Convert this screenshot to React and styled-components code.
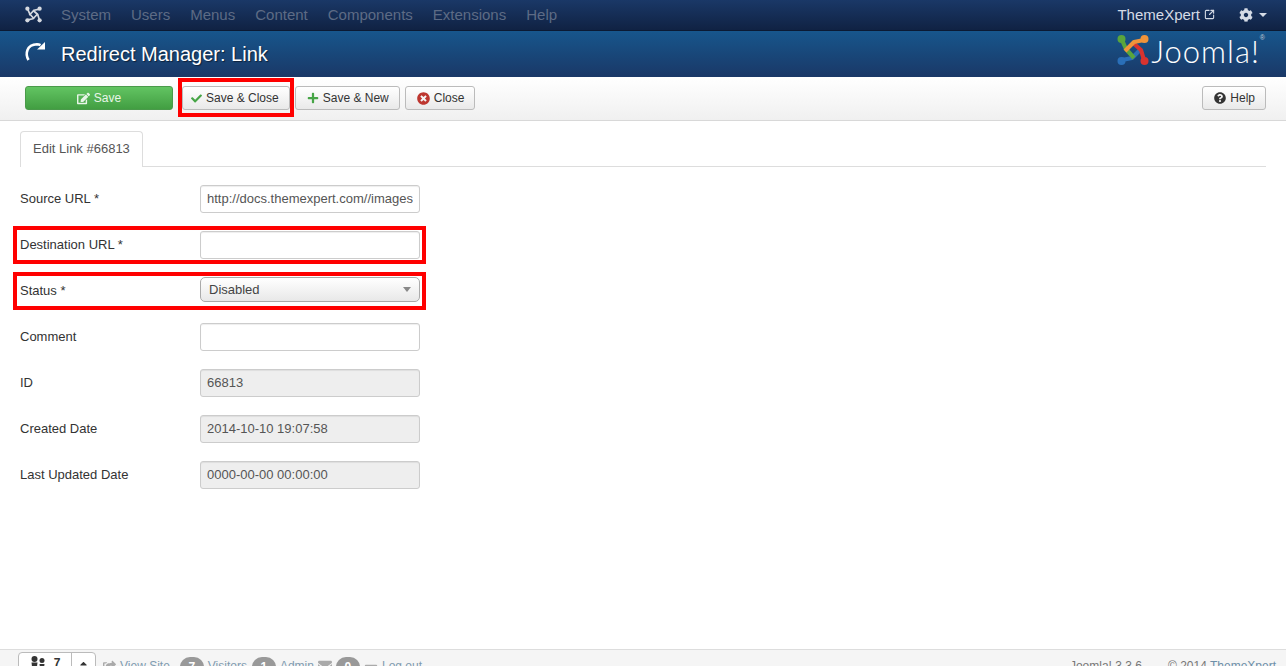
import React from "react";
import styled, { createGlobalStyle } from "styled-components";
import {
  FaCheck,
  FaPlus,
  FaTimesCircle,
  FaQuestionCircle,
  FaCog,
  FaEdit,
  FaEnvelope,
  FaMinus,
  FaShareSquare,
  FaCaretUp,
} from "react-icons/fa";
import { SquareArrowOutUpRight } from "lucide-react";

const GlobalStyle = createGlobalStyle`
  html, body { margin: 0; padding: 0; height: 100%; overflow: hidden; background: #fff; }
  body { font-family: "Liberation Sans", Arial, sans-serif; font-size: 13px; color: #333; }
  #root { height: 100%; }
  * { box-sizing: border-box; }
`;

const menus = ["System", "Users", "Menus", "Content", "Components", "Extensions", "Help"];

const fields = [
  { label: "Source URL *", value: "http://docs.themexpert.com//images" },
  { label: "Destination URL *", value: "", marked: true },
  { label: "Status *", select: "Disabled", marked: true },
  { label: "Comment", value: "" },
  { label: "ID", value: "66813", readOnly: true },
  { label: "Created Date", value: "2014-10-10 19:07:58", readOnly: true },
  { label: "Last Updated Date", value: "0000-00-00 00:00:00", readOnly: true },
];

// four hooked arms around a hollow diamond
function JoomlaMark({ size, mono }) {
  const c = (color) => (mono ? "#d5d9e0" : color);
  return (
    <svg
      width={size}
      height={size}
      viewBox="0 0 32 32"
      fill="none"
      strokeWidth={mono ? 3.2 : 4.2}
      strokeLinejoin="round"
    >
      <path d="M5 26 L15 24 L24 15" stroke={c("#2a6fb8")} />
      <circle cx="4.5" cy="27" r="4" fill={c("#2a6fb8")} />
      <path d="M5 6 L9 15 L17 24" stroke={c("#5aa53c")} />
      <circle cx="4.5" cy="5" r="4" fill={c("#5aa53c")} />
      <path d="M27 26 L24 16 L15 8" stroke={c("#d8332f")} />
      <circle cx="27.5" cy="27" r="4" fill={c("#d8332f")} />
      <path d="M27 6 L17 8 L8 17" stroke={c("#f0943a")} />
      <circle cx="27.5" cy="5" r="4" fill={c("#f0943a")} />
    </svg>
  );
}

export default function App() {
  return (
    <Page>
      <GlobalStyle />
      <TopBar>
        <MarkSlot>
          <JoomlaMark size={17} mono />
        </MarkSlot>
        <MenuList>
          {menus.map((m) => (
            <MenuItem key={m}>{m}</MenuItem>
          ))}
        </MenuList>
        <SiteLink>
          ThemeXpert
          <SquareArrowOutUpRight size={11} strokeWidth={2.4} />
        </SiteLink>
        <CogMenu>
          <FaCog size={14} />
          <Caret />
        </CogMenu>
      </TopBar>

      <Header>
        <RedoIcon width="24" height="22" viewBox="0 0 24 22" fill="none">
          <path d="M4.5 19 C1 13 2.5 3.5 13 3.2 C14.5 3.2 15.5 3.6 16.5 4.2" stroke="#fff" strokeWidth="2.6" />
          <path d="M13 8.5 L21 8.5 L21 1 Z" fill="#fff" />
        </RedoIcon>
        <Title>Redirect Manager: Link</Title>
        <Logo>
          <JoomlaMark size={32} />
          <LogoText>Joomla!</LogoText>
          <LogoReg>®</LogoReg>
        </Logo>
      </Header>

      <Toolbar>
        <PrimaryButton>
          <FaEdit size={13} />
          Save
        </PrimaryButton>
        <MarkedButton>
          <IconTint $color="#46a546">
            <FaCheck size={11} />
          </IconTint>
          Save &amp; Close
        </MarkedButton>
        <Button>
          <IconTint $color="#46a546">
            <FaPlus size={12} />
          </IconTint>
          Save &amp; New
        </Button>
        <Button>
          <IconTint $color="#bd362f">
            <FaTimesCircle size={13} />
          </IconTint>
          Close
        </Button>
        <HelpButton>
          <IconTint $color="#333">
            <FaQuestionCircle size={12} />
          </IconTint>
          Help
        </HelpButton>
      </Toolbar>

      <Main>
        <Tabs>
          <Tab>Edit Link #66813</Tab>
        </Tabs>
        <Form>
          {fields.map((f) => (
            <Row key={f.label} $marked={f.marked}>
              <Label>{f.label}</Label>
              {f.select ? (
                <Select>
                  {f.select}
                  <SelectArrow />
                </Select>
              ) : (
                <Input value={f.value} readOnly $disabled={f.readOnly} />
              )}
            </Row>
          ))}
        </Form>
      </Main>

      <Footer>
        <FooterLeft>
          <UsersGroup>
            <UsersCount>
              <svg width="16" height="15" viewBox="0 0 16 15" fill="#333">
                <circle cx="4.5" cy="3" r="3" />
                <path d="M1.5 6.5 H7.5 L6.5 15 H2.5 Z" />
                <circle cx="12" cy="4.5" r="2.5" />
                <path d="M9.5 8 H14.5 L13.7 15 H10.3 Z" />
              </svg>
              7
            </UsersCount>
            <UsersToggle>
              <FaCaretUp size={11} />
            </UsersToggle>
          </UsersGroup>
          <FooterLink $tail={6}>
            <FaShareSquare size={13} /> View Site
          </FooterLink>
          <Badge>7</Badge>
          <FooterLink $tail={1}>Visitors</FooterLink>
          <Badge>1</Badge>
          <FooterLink>
            Admin <FaEnvelope size={14} />
          </FooterLink>
          <Badge>0</Badge>
          <FooterLink>
            <FaMinus size={14} /> Log out
          </FooterLink>
        </FooterLeft>
        <FooterRight>
          <span>Joomla! 3.3.6</span>
          <span>
            © 2014 <Credit>ThemeXpert</Credit>
          </span>
        </FooterRight>
      </Footer>
    </Page>
  );
}

const Page = styled.div`
  height: 100%;
  display: flex;
  flex-direction: column;
  overflow: hidden;
`;

const TopBar = styled.div`
  height: 31px;
  flex: none;
  display: flex;
  align-items: center;
  padding: 0 19px 1px 25px;
  background: linear-gradient(#1a3867, #102243);
  border-bottom: 1px solid #0b1a33;
`;

const MarkSlot = styled.div`
  width: 36px;
  display: flex;
  height: 17px;
`;

const MenuList = styled.div`
  display: flex;
  gap: 20px;
  flex: 1;
`;

const MenuItem = styled.div`
  font-size: 15px;
  color: #5d6b85;
`;

const SiteLink = styled.div`
  display: flex;
  align-items: center;
  gap: 4px;
  font-size: 15px;
  color: #d5dbe6;
`;

const CogMenu = styled.div`
  display: flex;
  align-items: center;
  gap: 6px;
  margin-left: 24px;
  color: #d5dbe6;
`;

const Caret = styled.span`
  width: 0;
  height: 0;
  border-left: 4px solid transparent;
  border-right: 4px solid transparent;
  border-top: 4px solid #d5dbe6;
`;

const Header = styled.div`
  height: 46px;
  flex: none;
  display: flex;
  align-items: center;
  padding: 0 21px 0 24px;
  background: linear-gradient(#17568c, #1a3867);
`;

const RedoIcon = styled.svg`
  margin-bottom: 4px;
`;

const Title = styled.h1`
  flex: 1;
  margin: 0 0 0 13px;
  font-size: 20px;
  font-weight: 400;
  color: #fff;
  text-shadow: 1px 1px 1px rgba(0, 0, 0, 0.5);
`;

const Logo = styled.div`
  display: flex;
  align-items: flex-start;
  margin-bottom: 7px;
  color: #fff;
`;

const LogoText = styled.span`
  font-family: Lato, "Liberation Sans", sans-serif;
  font-weight: 300;
  font-size: 31px;
  line-height: 34px;
  letter-spacing: 1px;
  margin-left: 2px;
`;

const LogoReg = styled.span`
  font-size: 7px;
  color: #c5ccd6;
`;

const Toolbar = styled.div`
  height: 44px;
  flex: none;
  display: flex;
  align-items: flex-start;
  gap: 5px;
  padding: 9px 20px 0 25px;
  background: linear-gradient(#fff, #f0f0f0);
  border-bottom: 1px solid #d8d8d8;
`;

const Button = styled.div`
  position: relative;
  height: 24px;
  display: flex;
  align-items: center;
  gap: 4px;
  padding: 0 10px 0 11px;
  font-size: 12px;
  color: #333;
  background: linear-gradient(#fff, #e9e9e9);
  border: 1px solid #bbb;
  border-radius: 3px;
`;

const MarkedButton = styled(Button)`
  margin-left: 4px;
  padding: 0 10px 0 8px;
  &::after {
    content: "";
    position: absolute;
    top: -9px;
    bottom: -8px;
    left: -5px;
    right: -5px;
    border: 4px solid #f00;
    pointer-events: none;
  }
`;

const PrimaryButton = styled(Button)`
  width: 148px;
  justify-content: center;
  padding: 0 10px;
  color: #e8f5e8;
  background: linear-gradient(#62c462, #429e42);
  border-color: #4a9a4a;
`;

const HelpButton = styled(Button)`
  margin-left: auto;
`;

const IconTint = styled.span`
  display: flex;
  color: ${(p) => p.$color};
`;

const Main = styled.div`
  flex: 1;
  padding: 10px 20px 0;
`;

const Tabs = styled.div`
  display: flex;
  height: 36px;
  border-bottom: 1px solid #ddd;
`;

const Tab = styled.div`
  height: 36px;
  padding: 9px 12px 0;
  color: #555;
  background: #fff;
  border: 1px solid #ddd;
  border-bottom: 0;
  border-radius: 4px 4px 0 0;
`;

const Form = styled.div`
  display: flex;
  flex-direction: column;
  gap: 18px;
  padding-top: 18px;
`;

const Row = styled.div`
  position: relative;
  width: 400px;
  height: 28px;
  display: flex;
  align-items: center;
  &::after {
    content: "";
    display: ${(p) => (p.$marked ? "block" : "none")};
    position: absolute;
    top: -5px;
    bottom: -5px;
    left: -7px;
    right: -6px;
    border: 4px solid #f00;
    pointer-events: none;
  }
`;

const Label = styled.label`
  width: 180px;
  flex: none;
  padding-bottom: 2px;
  color: #333;
`;

const Input = styled.input`
  width: 220px;
  height: 28px;
  padding: 0 6px 1px;
  font: 13px "Liberation Sans", Arial, sans-serif;
  color: #555;
  background: ${(p) => (p.$disabled ? "#eee" : "#fff")};
  border: 1px solid #ccc;
  border-radius: 3px;
  box-shadow: inset 0 1px 1px rgba(0, 0, 0, 0.07);
  outline: none;
`;

const Select = styled.div`
  position: relative;
  width: 220px;
  height: 25px;
  margin-bottom: 3px;
  padding: 0 8px;
  display: flex;
  align-items: center;
  color: #444;
  background: linear-gradient(#fff, #e8e8e8);
  border: 1px solid #aaa;
  border-radius: 5px;
`;

const SelectArrow = styled.span`
  position: absolute;
  right: 8px;
  top: 9px;
  border-left: 4px solid transparent;
  border-right: 4px solid transparent;
  border-top: 5px solid #888;
`;

const Footer = styled.div`
  height: 17px;
  flex: none;
  display: flex;
  justify-content: space-between;
  padding: 2px 10px 0 18px;
  overflow: hidden;
  color: #777;
  font-size: 12px;
  background: #f5f5f5;
  border-top: 1px solid #ddd;
`;

const FooterLeft = styled.div`
  display: flex;
  align-items: flex-start;
  gap: 4px;
`;

const FooterRight = styled.div`
  display: flex;
  gap: 26px;
  padding-top: 7px;
`;

const Credit = styled.span`
  color: #6d8fa8;
`;

const UsersGroup = styled.div`
  display: flex;
  height: 24px;
  margin-right: 3px;
  background: #fff;
  border: 1px solid #bbb;
  border-radius: 4px;
`;

const UsersCount = styled.div`
  width: 53px;
  display: flex;
  justify-content: center;
  gap: 8px;
  padding-top: 3px;
  font-weight: 700;
  color: #333;
  border-right: 1px solid #bbb;
`;

const UsersToggle = styled.div`
  width: 23px;
  display: flex;
  justify-content: center;
  padding-top: 5px;
  color: #333;
`;

const FooterLink = styled.span`
  display: inline-flex;
  align-items: center;
  gap: 4px;
  padding-top: 7px;
  margin-right: ${(p) => p.$tail || 0}px;
  color: #7f9bb0;
  svg {
    color: #aaa;
  }
`;

const Badge = styled.span`
  width: 24px;
  height: 20px;
  margin-top: 5px;
  text-align: center;
  line-height: 20px;
  font-weight: 700;
  color: #fff;
  background: #999;
  border-radius: 10px;
`;
